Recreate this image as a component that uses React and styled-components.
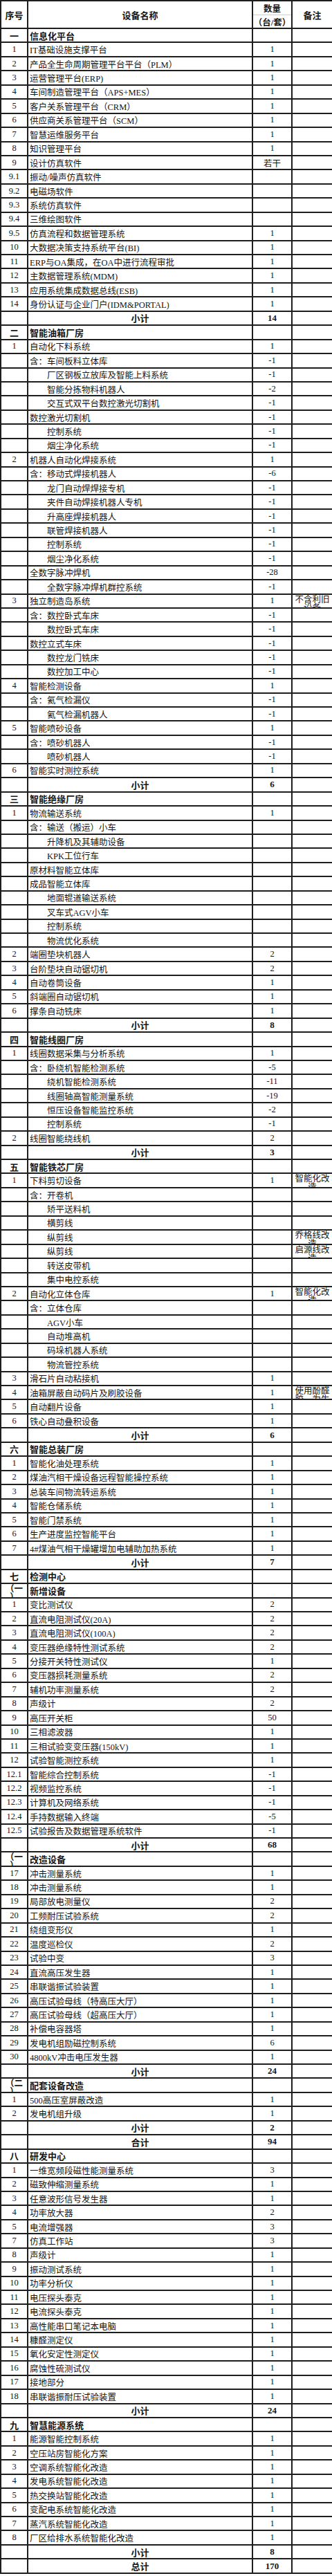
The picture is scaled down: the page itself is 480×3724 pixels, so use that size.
import styled, { createGlobalStyle } from "styled-components";

const GlobalStyle = createGlobalStyle`
    html, body {
        margin: 0;
        padding: 0;
        background-color: #fff;
    }

    body {
        font-family: "Liberation Serif", "Noto Sans CJK SC", serif;
        color: #161616;
    }
`

const line = "#1e1e1e"

const Sheet = styled.div`
    width: 480px;
    box-sizing: border-box;
    border-top: 2px solid ${line};
    border-left: 2px solid ${line};
`

const Row = styled.div`
    display: grid;
    grid-template-columns: 39px 325px 57px 57px;
    grid-template-rows: minmax(0, 1fr);
    height: ${p => p.$head ? "40px" : "20.45px"};
`

const Cell = styled.div`
    box-sizing: border-box;
    min-width: 0;
    border-right: 2px solid ${line};
    border-bottom: 2px solid ${line};
    overflow: hidden;
    display: flex;
    align-items: center;
    justify-content: ${p => p.$left ? "flex-start" : "center"};
    padding-left: ${p => p.$left ? (p.$indent ? "27px" : "2px") : "0"};
    font-size: ${p => p.$bold ? "13px" : "12.5px"};
    font-weight: ${p => p.$bold ? 700 : 400};
    white-space: nowrap;

    &:last-child {
        border-right: none;
    }
`

const WrapCell = styled.div`
    box-sizing: border-box;
    min-width: 0;
    border-right: 2px solid ${line};
    border-bottom: 2px solid ${line};
    overflow: hidden;
    padding-top: 1px;
    font-size: 12.5px;
    font-weight: ${p => p.$bold ? 700 : 400};
    line-height: 12px;
    text-align: center;
    white-space: pre-line;

    &:last-child {
        border-right: none;
    }
`

const HeadCell = styled(Cell)`
    font-size: 13px;
    font-weight: 700;
`

const HeadStack = styled.div`
    box-sizing: border-box;
    border-right: 2px solid ${line};
    border-bottom: 2px solid ${line};
    display: flex;
    flex-direction: column;
    font-size: 12.5px;
    font-weight: 700;

    span {
        flex: 1;
        display: flex;
        align-items: center;
        justify-content: center;
        white-space: nowrap;
    }

    span:first-child {
        border-bottom: 1px solid #cfcfcf;
    }
`

const S = (no, name) => ({ kind: "sec", no, name })
const N = (no, name, qty = "", note = "") => ({ kind: "item", no, name, qty, note })
const P = (name, qty = "", note = "") => ({ kind: "item", no: "", name, qty, note })
const C = (name, qty = "", note = "") => ({ kind: "item", no: "", name, qty, note, indent: true })
const T = (name, qty) => ({ kind: "sub", name, qty })

const rows = [
    S("一", "信息化平台"),
    N("1", "IT基础设施支撑平台", "1"),
    N("2", "产品全生命周期管理平台平台（PLM）", "1"),
    N("3", "运营管理平台(ERP)", "1"),
    N("4", "车间制造管理平台（APS+MES）", "1"),
    N("5", "客户关系管理平台（CRM）", "1"),
    N("6", "供应商关系管理平台（SCM）", "1"),
    N("7", "智慧运维服务平台", "1"),
    N("8", "知识管理平台", "1"),
    N("9", "设计仿真软件", "若干"),
    N("9.1", "振动/噪声仿真软件"),
    N("9.2", "电磁场软件"),
    N("9.3", "系统仿真软件"),
    N("9.4", "三维绘图软件"),
    N("9.5", "仿真流程和数据管理系统", "1"),
    N("10", "大数据决策支持系统平台(BI)", "1"),
    N("11", "ERP与OA集成，在OA中进行流程审批", "1"),
    N("12", "主数据管理系统(MDM)", "1"),
    N("13", "应用系统集成数据总线(ESB)", "1"),
    N("14", "身份认证与企业门户(IDM&PORTAL)", "1"),
    T("小计", "14"),

    S("二", "智能油箱厂房"),
    N("1", "自动化下料系统", "1"),
    P("含：车间板料立体库", "-1"),
    C("厂区钢板立放库及智能上料系统", "-1"),
    C("智能分拣物料机器人", "-2"),
    C("交互式双平台数控激光切割机", "-1"),
    P("数控激光切割机", "-1"),
    C("控制系统", "-1"),
    C("烟尘净化系统", "-1"),
    N("2", "机器人自动化焊接系统", "1"),
    P("含：移动式焊接机器人", "-6"),
    C("龙门自动焊焊接专机", "-1"),
    C("夹件自动焊接机器人专机", "-1"),
    C("升高座焊接机器人", "-1"),
    C("联管焊接机器人", "-1"),
    C("控制系统", "-1"),
    C("烟尘净化系统", "-1"),
    P("全数字脉冲焊机", "-28"),
    C("全数字脉冲焊机群控系统", "-1"),
    N("3", "独立制造岛系统", "1", "不含利旧设备"),
    P("含：数控卧式车床", "-1"),
    C("数控卧式车床", "-1"),
    P("数控立式车床", "-1"),
    C("数控龙门铣床", "-1"),
    C("数控加工中心", "-1"),
    N("4", "智能检测设备", "1"),
    P("含：氦气检漏仪", "-1"),
    C("氦气检漏机器人", "-1"),
    N("5", "智能喷砂设备", "1"),
    P("含：喷砂机器人", "-1"),
    C("喷砂机器人", "-1"),
    N("6", "智能实时测控系统", "1"),
    T("小计", "6"),

    S("三", "智能绝缘厂房"),
    N("1", "物流输送系统", "1"),
    P("含：输送（搬运）小车"),
    C("升降机及其辅助设备"),
    C("KPK工位行车"),
    P("原材料智能立体库"),
    P("成品智能立体库"),
    C("地面辊道输送系统"),
    C("叉车式AGV小车"),
    C("控制系统"),
    C("物流优化系统"),
    N("2", "端圈垫块机器人", "2"),
    N("3", "台阶垫块自动锯切机", "2"),
    N("4", "自动卷筒设备", "1"),
    N("5", "斜端圈自动锯切机", "1"),
    N("6", "撑条自动铣床", "1"),
    T("小计", "8"),

    S("四", "智能线圈厂房"),
    N("1", "线圈数据采集与分析系统", "1"),
    P("含：卧绕机智能检测系统", "-5"),
    C("绕机智能检测系统", "-11"),
    C("线圈轴高智能测量系统", "-19"),
    C("恒压设备智能监控系统", "-2"),
    C("控制系统", "-1"),
    N("2", "线圈智能绕线机", "2"),
    T("小计", "3"),

    S("五", "智能铁芯厂房"),
    N("1", "下料剪切设备", "1", "智能化改造"),
    P("含：开卷机"),
    C("矫平送料机"),
    C("横剪线"),
    C("纵剪线", "", "乔格线改造"),
    C("纵剪线", "", "启源线改造"),
    C("转送皮带机"),
    C("集中电控系统"),
    N("2", "自动化立体仓库", "1", "智能化改造"),
    P("含：立体仓库"),
    C("AGV小车"),
    C("自动堆高机"),
    C("码垛机器人系统"),
    C("物流管控系统"),
    N("3", "滑石片自动粘接机", "1"),
    N("4", "油箱屏蔽自动码片及刷胶设备", "1", "使用酚醛胶，为生产需要"),
    N("5", "自动翻片设备", "1"),
    N("6", "铁心自动叠积设备", "1"),
    T("小计", "6"),

    S("六", "智能总装厂房"),
    N("1", "智能化油处理系统", "1"),
    N("2", "煤油汽相干燥设备远程智能操控系统", "1"),
    N("3", "总装车间物流转运系统", "1"),
    N("4", "智能仓储系统", "1"),
    N("5", "智能门禁系统", "1"),
    N("6", "生产进度监控智能平台", "1"),
    N("7", "4#煤油气相干燥罐增加电辅助加热系统", "1"),
    T("小计", "7"),

    S("七", "检测中心"),
    S("（一\n）", "新增设备"),
    N("1", "变比测试仪", "2"),
    N("2", "直流电阻测试仪(20A)", "2"),
    N("3", "直流电阻测试仪(100A)", "2"),
    N("4", "变压器绝缘特性测试系统", "2"),
    N("5", "分接开关特性测试仪", "1"),
    N("6", "变压器损耗测量系统", "2"),
    N("7", "辅机功率测量系统", "2"),
    N("8", "声级计", "2"),
    N("9", "高压开关柜", "50"),
    N("10", "三相滤波器", "1"),
    N("11", "三相试验变变压器(150kV)", "1"),
    N("12", "试验智能测控系统", "1"),
    N("12.1", "智能综合控制系统", "-1"),
    N("12.2", "视频监控系统", "-1"),
    N("12.3", "计算机及网络系统", "-1"),
    N("12.4", "手持数据输入终端", "-5"),
    N("12.5", "试验报告及数据管理系统软件", "-1"),
    T("小计", "68"),
    S("（一\n）", "改造设备"),
    N("17", "冲击测量系统", "1"),
    N("18", "冲击测量系统", "1"),
    N("19", "局部放电测量仪", "2"),
    N("20", "工频耐压试验系统", "2"),
    N("21", "绕组变形仪", "1"),
    N("22", "温度巡检仪", "2"),
    N("23", "试验中变", "3"),
    N("24", "直流高压发生器", "1"),
    N("25", "串联谐振试验装置", "1"),
    N("26", "高压试验母线（特高压大厅）", "1"),
    N("27", "高压试验母线（超高压大厅）", "1"),
    N("28", "补偿电容器塔", "1"),
    N("29", "发电机组励磁控制系统", "6"),
    N("30", "4800kV冲击电压发生器", "1"),
    T("小计", "24"),
    S("（二\n）", "配套设备改造"),
    N("1", "500高压室屏蔽改造", "1"),
    N("2", "发电机组升级", "1"),
    T("小计", "2"),
    T("合计", "94"),

    S("八", "研发中心"),
    N("1", "一维宽频段磁性能测量系统", "3"),
    N("2", "磁致伸缩测量系统", "1"),
    N("3", "任意波形信号发生器", "1"),
    N("4", "功率放大器", "2"),
    N("5", "电流增强器", "3"),
    N("7", "仿真工作站", "3"),
    N("8", "声级计", "1"),
    N("9", "振动测试系统", "1"),
    N("10", "功率分析仪", "1"),
    N("11", "电压探头泰克", "1"),
    N("12", "电流探头泰克", "1"),
    N("13", "高性能串口笔记本电脑", "1"),
    N("14", "糠醛测定仪", "1"),
    N("15", "氧化安定性测定仪", "1"),
    N("16", "腐蚀性硫测试仪", "1"),
    N("17", "接地部分", "1"),
    N("18", "串联谐振耐压试验装置", "1"),
    T("小计", "24"),

    S("九", "智慧能源系统"),
    N("1", "能源智能控制系统", "1"),
    N("2", "空压站房智能化方案", "1"),
    N("3", "空调系统智能化改造", "1"),
    N("4", "发电系统智能化改造", "1"),
    N("5", "热交换站智能化改造", "1"),
    N("6", "变配电系统智能化改造", "1"),
    N("7", "蒸汽系统智能化改造", "1"),
    N("8", "厂区给排水系统智能化改造", "1"),
    T("小计", "8"),
    T("总计", "170"),
]

function NoCell({ row }) {
    if (row.no.includes("\n")) {
        return <WrapCell $bold>{row.no}</WrapCell>
    }
    return <Cell $bold={row.kind === "sec"}>{row.no}</Cell>
}

function Line({ row }) {
    if (row.kind === "sub") {
        return (
            <Row>
                <Cell />
                <Cell $bold>{row.name}</Cell>
                <Cell $bold>{row.qty}</Cell>
                <Cell />
            </Row>
        )
    }

    return (
        <Row>
            <NoCell row={row} />
            <Cell $left $indent={row.indent} $bold={row.kind === "sec"}>{row.name}</Cell>
            <Cell>{row.qty}</Cell>
            {row.note ? <WrapCell>{row.note}</WrapCell> : <Cell />}
        </Row>
    )
}

export default function App() {
    return (
        <>
            <GlobalStyle />
            <Sheet>
                <Row $head>
                    <HeadCell>序号</HeadCell>
                    <HeadCell>设备名称</HeadCell>
                    <HeadStack>
                        <span>数量</span>
                        <span>（台/套）</span>
                    </HeadStack>
                    <HeadCell>备注</HeadCell>
                </Row>
                {rows.map((row, i) => <Line key={i} row={row} />)}
            </Sheet>
        </>
    )
}
